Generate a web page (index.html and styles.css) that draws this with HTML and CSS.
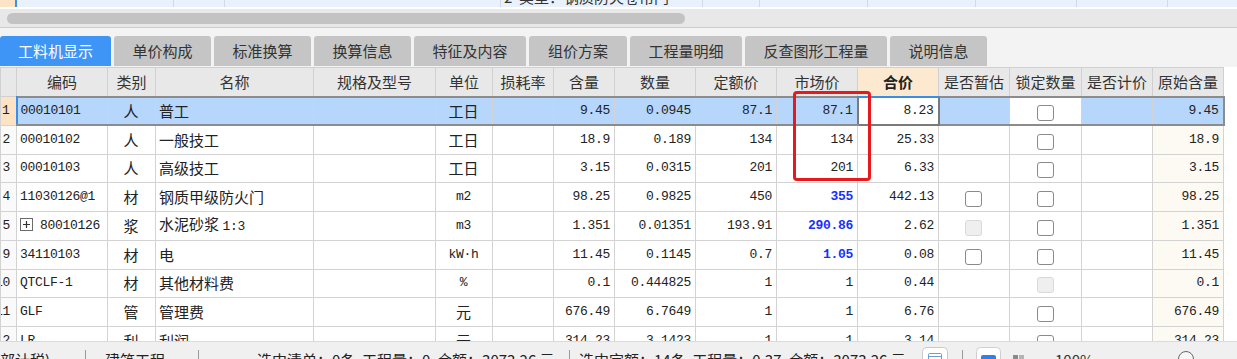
FILE: index.html
```html
<!DOCTYPE html>
<html lang="zh-CN">
<head>
    <meta charset="UTF-8">
    <title>工料机显示</title>
    <link rel="stylesheet" href="styles.css">
</head>
<body>
    <div class="strip">
        <div class="s-rn"></div>
        <div class="s-cur"></div>
        <div></div>
        <div></div>
        <div><div class="strip-text">2&nbsp;&nbsp;类型：钢质防火卷帘门</div></div>
        <div></div>
        <div></div>
        <div></div>
        <div></div>
        <div></div>
        <div></div>
    </div>

    <div class="hscroll"><div class="thumb"></div></div>

    <div class="tabbar">
        <div class="tab on w111">工料机显示</div>
        <div class="tab w97">单价构成</div>
        <div class="tab w97">标准换算</div>
        <div class="tab w97">换算信息</div>
        <div class="tab w112">特征及内容</div>
        <div class="tab w98">组价方案</div>
        <div class="tab w112">工程量明细</div>
        <div class="tab w142">反查图形工程量</div>
        <div class="tab w97">说明信息</div>
    </div>

    <div class="grid">
        <table>
            <colgroup>
                <col style="width:16px"><col style="width:91px"><col style="width:48px"><col style="width:158px">
                <col style="width:122px"><col style="width:57px"><col style="width:61px"><col style="width:61px">
                <col style="width:81px"><col style="width:81px"><col style="width:81px"><col style="width:81px">
                <col style="width:71px"><col style="width:72px"><col style="width:71px"><col style="width:71px">
            </colgroup>
            <thead>
                <tr>
                    <th></th><th>编码</th><th>类别</th><th>名称</th><th>规格及型号</th><th>单位</th><th>损耗率</th><th>含量</th>
                    <th>数量</th><th>定额价</th><th>市场价</th><th class="hl">合价</th><th>是否暂估</th><th>锁定数量</th><th>是否计价</th><th>原始含量</th>
                </tr>
            </thead>
            <tbody>
                <tr class="sel">
                    <td class="rn">1</td><td class="l m first">00010101</td><td class="c">人</td><td class="l">普工</td><td></td>
                    <td class="c">工日</td><td></td><td class="n">9.45</td><td class="n">0.0945</td><td class="n">87.1</td>
                    <td class="n">87.1</td><td class="n cur">8.23</td><td></td><td class="c wh"><span class="cb"></span></td><td></td><td class="n last">9.45</td>
                </tr>
                <tr>
                    <td class="rn">2</td><td class="l m">00010102</td><td class="c">人</td><td class="l">一般技工</td><td></td>
                    <td class="c">工日</td><td></td><td class="n">18.9</td><td class="n">0.189</td><td class="n">134</td>
                    <td class="n">134</td><td class="n">25.33</td><td></td><td class="c"><span class="cb"></span></td><td></td><td class="n orig">18.9</td>
                </tr>
                <tr>
                    <td class="rn">3</td><td class="l m">00010103</td><td class="c">人</td><td class="l">高级技工</td><td></td>
                    <td class="c">工日</td><td></td><td class="n">3.15</td><td class="n">0.0315</td><td class="n">201</td>
                    <td class="n">201</td><td class="n">6.33</td><td></td><td class="c"><span class="cb"></span></td><td></td><td class="n orig">3.15</td>
                </tr>
                <tr>
                    <td class="rn">4</td><td class="l m">11030126@1</td><td class="c">材</td><td class="l">钢质甲级防火门</td><td></td>
                    <td class="c m">m2</td><td></td><td class="n">98.25</td><td class="n">0.9825</td><td class="n">450</td>
                    <td class="n bl">355</td><td class="n">442.13</td><td class="c"><span class="cb"></span></td><td class="c"><span class="cb"></span></td><td></td><td class="n orig">98.25</td>
                </tr>
                <tr>
                    <td class="rn">5</td>
                    <td class="l m"><svg class="plus" width="13" height="13" viewBox="0 0 13 13"><rect x="0.5" y="0.5" width="12" height="12" fill="#fff" stroke="#6b6b6b"/><path d="M3 6.5h7M6.5 3v7" stroke="#333" stroke-width="1.2"/></svg>80010126</td>
                    <td class="c">浆</td><td class="l">水泥砂浆 <span class="m">1:3</span></td><td></td>
                    <td class="c m">m3</td><td></td><td class="n">1.351</td><td class="n">0.01351</td><td class="n">193.91</td>
                    <td class="n bl">290.86</td><td class="n">2.62</td><td class="c"><span class="cb dis"></span></td><td class="c"><span class="cb"></span></td><td></td><td class="n orig">1.351</td>
                </tr>
                <tr>
                    <td class="rn">9</td><td class="l m">34110103</td><td class="c">材</td><td class="l">电</td><td></td>
                    <td class="c m">kW·h</td><td></td><td class="n">11.45</td><td class="n">0.1145</td><td class="n">0.7</td>
                    <td class="n bl">1.05</td><td class="n">0.08</td><td class="c"><span class="cb"></span></td><td class="c"><span class="cb"></span></td><td></td><td class="n orig">11.45</td>
                </tr>
                <tr>
                    <td class="rn">10</td><td class="l m">QTCLF-1</td><td class="c">材</td><td class="l">其他材料费</td><td></td>
                    <td class="c m">%</td><td></td><td class="n">0.1</td><td class="n">0.444825</td><td class="n">1</td>
                    <td class="n">1</td><td class="n">0.44</td><td></td><td class="c"><span class="cb dis"></span></td><td></td><td class="n orig">0.1</td>
                </tr>
                <tr>
                    <td class="rn">11</td><td class="l m">GLF</td><td class="c">管</td><td class="l">管理费</td><td></td>
                    <td class="c">元</td><td></td><td class="n">676.49</td><td class="n">6.7649</td><td class="n">1</td>
                    <td class="n">1</td><td class="n">6.76</td><td></td><td class="c"><span class="cb"></span></td><td></td><td class="n orig">676.49</td>
                </tr>
                <tr>
                    <td class="rn">12</td><td class="l m">LR</td><td class="c">利</td><td class="l">利润</td><td></td>
                    <td class="c">元</td><td></td><td class="n">314.23</td><td class="n">3.1423</td><td class="n">1</td>
                    <td class="n">1</td><td class="n">3.14</td><td></td><td class="c"><span class="cb"></span></td><td></td><td class="n orig">314.23</td>
                </tr>
            </tbody>
        </table>
    </div>

    <div class="status">
        <div class="seg s1">部计税)</div>
        <div class="sep"></div>
        <div class="seg s2">建筑工程</div>
        <div class="sep"></div>
        <div class="seg s3">选中清单：0条&nbsp;&nbsp;工程量：0&nbsp;&nbsp;合额：3073.26 元</div>
        <div class="sep"></div>
        <div class="seg s4">
            <span>选中定额：14条&nbsp;&nbsp;工程量：0.37&nbsp;&nbsp;合额：3073.26 元</span>
            <svg class="ico" width="26" height="24" viewBox="0 0 26 24"><rect x="0.5" y="0.5" width="25" height="23" rx="4" fill="#fff" stroke="#c9c9c9"/><rect x="6.5" y="6.5" width="13" height="12" rx="1" fill="none" stroke="#6d9bd6"/><path d="M6.5 9.5h13" stroke="#6d9bd6"/></svg>
        </div>
        <div class="sep"></div>
        <div class="seg s5">
            <svg class="ico" width="25" height="24" viewBox="0 0 25 24"><rect x="0.5" y="0.5" width="24" height="23" rx="4" fill="#fff" stroke="#cfcfcf"/><rect x="5" y="8" width="15" height="13" rx="2" fill="#2f80ea"/></svg>
            <svg class="ico pages" width="12" height="20" viewBox="0 0 12 20"><rect x="0" y="6" width="5" height="14" fill="#8a8a8a"/><rect x="6" y="6" width="5" height="14" fill="#b4b4b4"/></svg>
            <span class="zoom">100%</span>
            <span class="knob"></span>
        </div>
    </div>

    <div class="mark"></div>
</body>
</html>
```

FILE: styles.css
```css
body {
    margin: 0;
    width: 1237px;
    height: 359px;
    overflow: hidden;
    position: relative;
    font-family: "Noto Sans CJK SC", sans-serif;
    color: #222;
    background: #fff;
}

/* upper table, mostly scrolled away */
.strip {
    display: grid;
    grid-template-columns: 15px 158px 51px 276px 202px 57px 108px 108px 101px 91px 1fr;
    height: 7px;
    background: #e9f1fc;
    border-bottom: 2px solid #fff;
}
.strip > div {
    border-left: 1px solid #d3dae4;
    overflow: hidden;
}
.strip .s-rn {
    background: #fde3c6;
    border-left: 0;
}
.strip .s-cur {
    border-left: 2px solid #3d8ff0;
}
.strip-text {
    margin-top: -13px;
    padding-left: 3px;
    line-height: 20px;
    font-size: 15px;
    color: #333;
    white-space: nowrap;
}

.hscroll {
    height: 19px;
    box-sizing: border-box;
    padding: 4px 0 0 7px;
    background: #e8e8e8;
    border-bottom: 1px solid #cdcdcd;
}
.thumb {
    width: 678px;
    height: 11px;
    border-radius: 6px;
    background: #c3c3c3;
}

.tabbar {
    display: flex;
    gap: 3px;
    height: 39px;
    box-sizing: border-box;
    padding: 8px 0 1px 0;
    background: #f3f3f3;
}
.tab {
    height: 30px;
    line-height: 30px;
    font-size: 15px;
    text-align: center;
    color: #333;
    background: #c5c5c5;
    border-radius: 3px 3px 0 0;
}
.tab.on {
    background: #3e95f5;
    color: #fff;
}
.w97 { width: 97px; }
.w98 { width: 98px; }
.w111 { width: 111px; }
.w112 { width: 112px; }
.w142 { width: 142px; }

.grid {
    height: 274px;
    overflow: hidden;
    background: #fff;
}
table {
    border-collapse: collapse;
    table-layout: fixed;
    width: 1223px;
}
thead tr {
    height: 29px;
}
tbody tr {
    height: 28.75px;
}
th {
    padding: 0;
    font-size: 15px;
    font-weight: normal;
    line-height: 20px;
    color: #333;
    background: #e8e8e8;
    border: 1px solid #d0d0d0;
    white-space: nowrap;
    overflow: hidden;
}
th.hl {
    background: #fde9cf;
    font-weight: bold;
    color: #222;
    border-bottom: 2px solid #3b8ee8;
}
td {
    padding: 0 4px 0 3px;
    font-size: 15px;
    line-height: 20px;
    border: 1px solid #d3d3d3;
    white-space: nowrap;
    overflow: hidden;
}
td.rn {
    direction: rtl;
    padding: 0 6px 0 0;
    background: #fafafa;
    font-family: "Liberation Mono", monospace;
    font-size: 13px;
    letter-spacing: -0.3px;
}
.m, td.n {
    font-family: "Liberation Mono", monospace;
    font-size: 13px;
    letter-spacing: -0.3px;
}
.l { text-align: left; }
.c { text-align: center; }
td.n { text-align: right; }
td.bl {
    color: #1530ff;
    font-weight: bold;
}
td.orig {
    background: #fdf9f3;
}
.plus {
    vertical-align: -2px;
    margin-right: 7px;
}

tr.sel td {
    background: #b6d6fb;
    border-top: 2px solid #8c8c8c;
    border-bottom: 2px solid #8c8c8c;
}
tr.sel td.rn {
    background: #fde2c3;
    border-top: 1px solid #d3d3d3;
    border-bottom: 1px solid #d3d3d3;
}
tr.sel td.first {
    border-left: 2px solid #3a8df0;
}
tr.sel td.last {
    border-right: 2px solid #8c8c8c;
}
tr.sel td.cur {
    background: #fff;
    border: 2px solid #7a7a7a;
}
tr.sel td.wh {
    background: #fff;
}

.cb {
    display: inline-block;
    width: 17px;
    height: 16px;
    box-sizing: border-box;
    border: 1px solid #8a8a8a;
    border-radius: 3px;
    background: #fff;
    vertical-align: middle;
}
.cb.dis {
    border-color: #d9d9d9;
    background: #efefef;
}

.status {
    display: flex;
    align-items: center;
    height: 35px;
    box-sizing: border-box;
    background: #f0f0f0;
    border-top: 1px solid #dadada;
    font-size: 15px;
    color: #222;
    white-space: nowrap;
}
.seg {
    display: flex;
    align-items: center;
    box-sizing: border-box;
    flex: 0 0 auto;
}
.sep {
    width: 1px;
    height: 18px;
    background: #9a9a9a;
    flex: 0 0 auto;
}
.s1 { width: 85px; }
.s2 { width: 112px; padding-left: 19px; }
.s3 { width: 370px; padding-left: 58px; }
.s4 { width: 392px; padding: 0 14px 0 9px; justify-content: space-between; }
.s5 { padding-left: 13px; }
.pages { margin-left: 12px; }
.zoom { margin-left: 30px; color: #333; }
.knob {
    width: 16px;
    height: 16px;
    box-sizing: border-box;
    margin-left: 84px;
    border: 1.5px solid #666;
    border-radius: 50%;
    background: #f7f7f7;
}

/* red annotation drawn over the market price column */
.mark {
    position: absolute;
    left: 793px;
    top: 91px;
    width: 78px;
    height: 90px;
    box-sizing: border-box;
    border: 3px solid #e8191c;
    border-radius: 4px;
}
```
